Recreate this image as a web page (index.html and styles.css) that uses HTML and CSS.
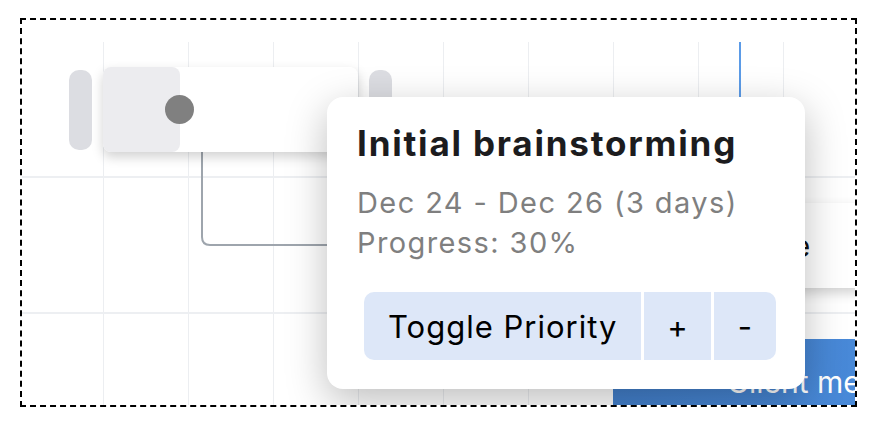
FILE: index.html
```html
<!DOCTYPE html>
<html lang="en">
<head>
<meta charset="utf-8">
<title>Gantt</title>
<link rel="stylesheet" href="styles.css">
</head>
<body>
<div class="frame">
  <div class="header"></div>
  <div class="chart">
    <div class="today" style="left:717px"></div>
    <svg class="arrows" width="833" height="400" viewBox="0 0 833 400">
      <path d="M180 110 V195 Q180 203 188 203 H421" fill="none" stroke="#9ea5ad" stroke-width="2"/>
    </svg>
    <div class="row">
      <div class="bar bar-task" style="left:81px;width:255px">
        <div class="progress" style="width:77px"></div>
        <span class="progress-handle" style="left:62px"></span>
        <span class="handle handle-left"></span>
        <span class="handle handle-right"></span>
      </div>
    </div>
    <div class="row">
      <div class="bar bar-task bar-labelled" style="left:421px;width:500px">
        <span class="bar-label label-dark label-wire">Wireframe</span>
      </div>
    </div>
    <div class="row">
      <div class="bar bar-blue bar-labelled" style="left:591px;width:400px">
        <span class="bar-label label-light label-client">Client meeting</span>
      </div>
    </div>
  </div>
  <div class="popup">
    <div class="popup-title">Initial brainstorming</div>
    <div class="popup-line">Dec 24 - Dec 26 (3 days)</div>
    <div class="popup-line">Progress: 30%</div>
    <div class="popup-actions">
      <button class="action">Toggle Priority</button>
      <button class="action action-plus">+</button>
      <button class="action action-minus">-</button>
    </div>
  </div>
</div>
</body>
</html>
```
FILE: styles.css
```css
* { box-sizing: border-box; }
html, body { margin: 0; background: #fff; }
body { font-family: Inter, "Liberation Sans", sans-serif; }

.frame {
  position: relative;
  margin: 18px 0 0 20px;
  width: 837px;
  height: 389px;
  border: 2px dashed #000;
  overflow: hidden;
  background: #fff;
}
.header { height: 22px; }
.chart {
  position: relative;
  height: 420px;
  background-image: linear-gradient(to right, #eceef1 0 1px, transparent 1px);
  background-size: 85px 100%;
  background-position: 81px 0;
}
.row {
  position: relative;
  height: 136px;
  border-bottom: 2px solid #edeff2;
}
.today {
  position: absolute;
  top: 0;
  bottom: 0;
  width: 2px;
  background: #5b9be7;
}
.arrows { position: absolute; left: 0; top: 0; z-index: 1; }

.bar {
  position: absolute;
  top: 25px;
  height: 85px;
  border-radius: 8px;
  z-index: 2;
}
.bar-task {
  background: #fff;
  box-shadow: 0 5px 12px rgba(0, 0, 0, 0.18);
}
.progress {
  position: absolute;
  left: 0; top: 0; bottom: 0;
  background: #ececef;
  border-radius: 8px;
}
.progress-handle {
  position: absolute;
  top: 28px;
  width: 29px;
  height: 29px;
  border-radius: 50%;
  background: #808080;
}
.handle {
  position: absolute;
  top: 3px;
  width: 23px;
  height: 80px;
  border-radius: 10px;
  background: #dcdde2;
}
.handle-left { left: -34px; }
.handle-right { left: 266px; }

.bar-labelled { display: flex; align-items: center; }
.bar-blue {
  background: linear-gradient(to right, #4380cc, #4c8fe0);
  border-radius: 8px 0 0 8px;
}
.bar-label { font-size: 30px; white-space: nowrap; }
.label-dark { color: #111; }
.label-light { color: #fff; }
.label-wire { padding-left: 219px; }
.label-client { padding-left: 114px; }

.popup {
  position: absolute;
  left: 305px;
  top: 77px;
  width: 478px;
  padding: 26px 29px 29px 30px;
  background: #fff;
  border-radius: 16px;
  box-shadow: 0 12px 40px rgba(0, 0, 0, 0.26);
  z-index: 5;
}
.popup-title {
  font-size: 35px;
  line-height: 40px;
  font-weight: 700;
  letter-spacing: 1.8px;
  color: #1c1c1e;
  margin-bottom: 20px;
}
.popup-line {
  font-size: 29px;
  line-height: 40px;
  letter-spacing: 1.4px;
  color: #7f7f7f;
}
.popup-actions {
  display: flex;
  gap: 3px;
  margin: 29px 0 0 7px;
  border-radius: 10px;
  overflow: hidden;
}
.action {
  flex: none;
  height: 68px;
  padding: 0 24px;
  border: none;
  background: #dde7f8;
  font-family: inherit;
  font-size: 31px;
  letter-spacing: 1px;
  white-space: nowrap;
  color: #000;
}
.action-plus { width: 67px; padding: 0; }
.action-minus { width: 62px; padding: 0; }
```
